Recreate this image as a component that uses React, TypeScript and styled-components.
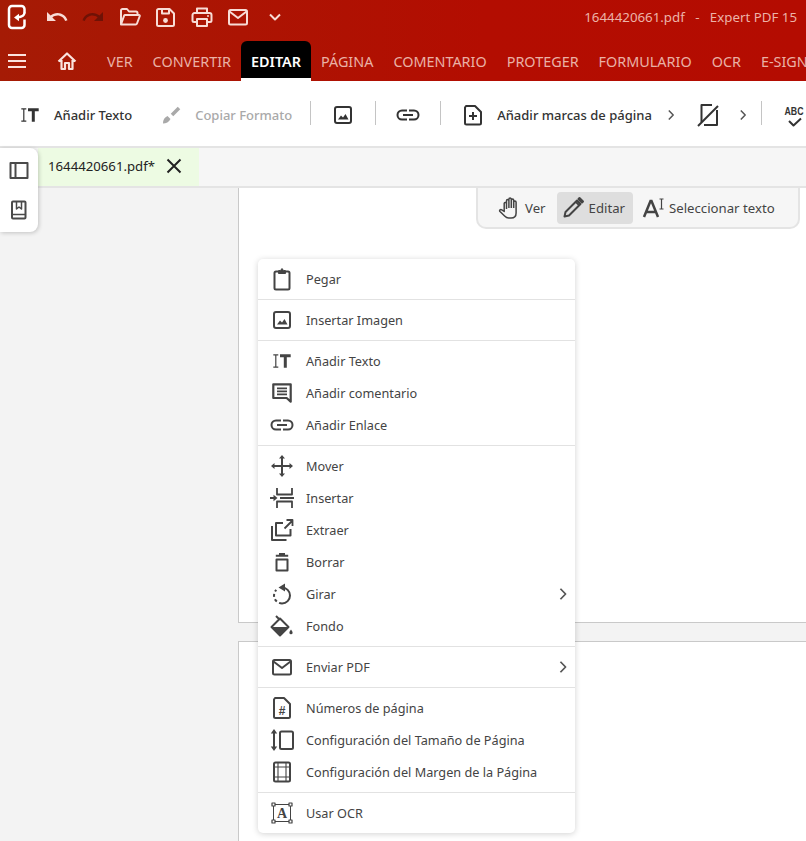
// App.tsx
import React from 'react';
import styled, { createGlobalStyle } from 'styled-components';

const GlobalStyle = createGlobalStyle`
  html, body {
    margin: 0;
    padding: 0;
    height: 100%;
    background: #f3f3f3;
    font-family: "Noto Sans", "Open Sans", "Liberation Sans", sans-serif;
  }
  #root { height: 100%; }
`;

const Window = styled.div`
  position: relative;
  height: 100vh;
  overflow: hidden;
  display: flex;
  flex-direction: column;
`;

const Header = styled.header`
  background: linear-gradient(90deg, #a51b05 0%, #b30d01 60%, #b40c01 100%);
  height: 81px;
  flex: none;
`;

const TitleBar = styled.div`
  height: 41px;
  box-sizing: border-box;
  display: flex;
  align-items: center;
  padding: 0 0 7px 6px;
  color: #fff;
`;

const QuickButton = styled.span<{ $ml: number; $dim?: boolean }>`
  display: flex;
  margin-left: ${p => p.$ml}px;
  color: ${p => (p.$dim ? '#6f1206' : '#f8dcd6')};
`;

const LogoMark = styled.span`
  display: flex;
  color: #fff;
`;

const TitleText = styled.div`
  margin-left: auto;
  margin-right: 9px;
  font-size: 13.3px;
  color: #ecb3a8;
  white-space: pre;
`;

const NavBar = styled.nav`
  height: 40px;
  display: flex;
  align-items: flex-start;
  padding-left: 5px;
  white-space: nowrap;
`;

const NavIcon = styled.span<{ $ml: number }>`
  display: flex;
  margin-left: ${p => p.$ml}px;
  height: 37px;
  box-sizing: border-box;
  padding-top: 3px;
  align-items: center;
  color: #fbe3de;
`;

const NavTab = styled.div<{ $active?: boolean }>`
  height: 37px;
  box-sizing: border-box;
  padding: 3px 10px 0;
  display: flex;
  align-items: center;
  font-size: 14.4px;
  color: ${p => (p.$active ? '#fff' : '#eab1a6')};
  font-weight: ${p => (p.$active ? 600 : 400)};
  background: ${p => (p.$active ? '#000' : 'transparent')};
  border-radius: ${p => (p.$active ? '6px 6px 0 0' : '0')};
  box-shadow: ${p => (p.$active ? '0 3px 0 #fff' : 'none')};
`;

const NavTabs = styled.div`
  display: flex;
  margin-left: 18px;
`;

const Toolbar = styled.div`
  height: 62px;
  flex: none;
  box-sizing: content-box;
  background: #fff;
  border-bottom: 2px solid #e4e4e4;
  display: flex;
  align-items: center;
  white-space: nowrap;
  overflow: hidden;
  padding: 3px 0 0 18px;
`;

const ToolItem = styled.div<{ $ml?: number; $off?: boolean }>`
  display: flex;
  flex: none;
  align-items: center;
  gap: 12px;
  margin-left: ${p => p.$ml ?? 0}px;
  font-size: 13px;
  font-weight: 500;
  color: ${p => (p.$off ? '#a9a9a9' : '#333')};
`;

const ToolDivider = styled.span<{ $ml: number }>`
  flex: none;
  width: 1px;
  height: 24px;
  margin-bottom: 4px;
  background: #c4c4c4;
  margin-left: ${p => p.$ml}px;
`;

const ToolChevron = styled.span<{ $ml: number }>`
  display: flex;
  flex: none;
  margin-left: ${p => p.$ml}px;
  color: #555;
`;

const TabStrip = styled.div`
  height: 38px;
  flex: none;
  background: #f6f6f6;
  border-bottom: 2px solid #e4e4e4;
  padding-left: 38px;
  display: flex;
`;

const FileTab = styled.div`
  width: 161px;
  box-sizing: border-box;
  background: #edfbe3;
  padding: 0 0 2px 10px;
  display: flex;
  align-items: center;
  font-size: 13.2px;
  color: #222;
`;

const TabClose = styled.span`
  display: flex;
  margin-left: 10px;
  color: #222;
`;

const Workspace = styled.main`
  flex: 1;
  min-height: 0;
  background: #f3f3f3;
  padding-left: 238px;
  display: flex;
  flex-direction: column;
  gap: 18px;
`;

const Page = styled.section<{ $h: number; $scrolled?: boolean }>`
  height: ${p => p.$h}px;
  flex: none;
  background: #fff;
  border: 1px solid #c9c9c9;
  border-right: 0;
  border-top-width: ${p => (p.$scrolled ? 0 : 1)}px;
  box-sizing: border-box;
`;

const SidePanel = styled.aside`
  position: absolute;
  left: 0;
  top: 148px;
  width: 38px;
  height: 84px;
  background: #fff;
  border-radius: 0 8px 8px 0;
  box-shadow: 1px 1px 4px rgba(0, 0, 0, 0.2);
  display: flex;
  flex-direction: column;
  align-items: center;
  padding-top: 10px;
  box-sizing: border-box;
  gap: 16px;
  color: #4a4a4a;
`;

const ModeBar = styled.div`
  position: absolute;
  left: 476px;
  top: 188px;
  width: 324px;
  height: 41px;
  box-sizing: border-box;
  background: #f6f6f6;
  border: 2px solid #e4e4e4;
  border-top: 0;
  border-radius: 0 0 10px 10px;
  display: flex;
  align-items: flex-start;
  padding: 4px 0 0 13px;
`;

const ModeButton = styled.div<{ $active?: boolean; $pl: number; $pr: number; $gap?: number }>`
  height: 32px;
  display: flex;
  align-items: center;
  gap: ${p => p.$gap ?? 4}px;
  padding: 0 ${p => p.$pr}px 0 ${p => p.$pl}px;
  border-radius: 4px;
  background: ${p => (p.$active ? '#dedede' : 'transparent')};
  font-size: 13.2px;
  color: #444;
  white-space: nowrap;
`;

const Menu = styled.div`
  position: absolute;
  left: 258px;
  top: 259px;
  width: 317px;
  background: #fff;
  border-radius: 5px;
  box-shadow: 0 1px 6px rgba(0, 0, 0, 0.18);
`;

const MenuGroup = styled.div`
  padding: 4px 0;
  & + & {
    border-top: 1px solid #e2e2e2;
  }
`;

const MenuRow = styled.div`
  height: 32px;
  display: flex;
  align-items: center;
  padding-left: 12px;
  font-size: 12.7px;
  color: #444;
`;

const MenuIcon = styled.span`
  display: flex;
  width: 24px;
  margin-right: 12px;
  color: #444;
`;

const MenuArrow = styled.span`
  display: flex;
  margin-left: auto;
  margin-right: 5px;
  color: #555;
`;

type IconProps = { size?: number; w?: number; h?: number; children: React.ReactNode; vb?: string };

const Ico = ({ size = 24, w, h, children, vb = '0 0 24 24' }: IconProps) => (
  <svg
    width={w ?? size}
    height={h ?? size}
    viewBox={vb}
    fill="none"
    stroke="currentColor"
    strokeWidth={2}
    strokeLinejoin="round"
  >
    {children}
  </svg>
);

const Logo = () => (
  <Ico w={24} h={26} vb="0 0 24 26">
    <path d="M18.500 9.500V5a3 3 0 0 0-3-3H6a3 3 0 0 0-3 3v16a3 3 0 0 0 3 3h9.500a3 3 0 0 0 3-3v-5.500" strokeWidth={2.500} />
    <path d="M18.500 8.500c0 3.500-3 4.500-7.500 5" strokeWidth={2.300} />
    <path d="M8 13.500l5-3.800v7.600z" fill="currentColor" stroke="none" />
  </Ico>
);
const UndoIcon = () => (
  <Ico><path fill="currentColor" stroke="none" d="M12.5 8c-2.65 0-5.05.99-6.9 2.6L2 7v9h9l-3.62-3.62c1.39-1.16 3.16-1.88 5.12-1.88 3.54 0 6.55 2.31 7.6 5.5l2.37-.78C21.08 11.03 17.15 8 12.5 8z" /></Ico>
);
const RedoIcon = () => (
  <Ico><path fill="currentColor" stroke="none" d="M18.4 10.6C16.55 8.99 14.15 8 11.5 8c-4.65 0-8.58 3.03-9.96 7.22L3.9 16c1.05-3.19 4.05-5.5 7.6-5.5 1.95 0 3.73.72 5.12 1.88L13 16h9V7l-3.6 3.6z" /></Ico>
);
const FolderIcon = () => (
  <Ico><path d="M3 19.500V5.500A1.500 1.500 0 0 1 4.500 4H9l2 2.500h7A1.500 1.500 0 0 1 19.500 8v2M3 19.500l3.200-9a1 1 0 0 1 1-.5H21a.8.8 0 0 1 .8 1L19 18.500a1.500 1.500 0 0 1-1.400 1z" /></Ico>
);
const SaveIcon = () => (
  <Ico>
    <path d="M4.500 4h11L20 8.500v11a1.500 1.500 0 0 1-1.500 1.500h-14A1.500 1.500 0 0 1 3 19.500v-14A1.500 1.500 0 0 1 4.500 4z" />
    <path d="M8 4v4.500h7V4" />
    <circle cx="11.500" cy="15.500" r="2.400" fill="currentColor" stroke="none" />
  </Ico>
);
const PrintIcon = () => (
  <Ico>
    <path d="M7 8V3.500h10V8M7 17H4a1.500 1.500 0 0 1-1.500-1.500V10A2 2 0 0 1 4.500 8h15a2 2 0 0 1 2 2v5.500A1.500 1.500 0 0 1 20 17h-3" />
    <path d="M7 14h10v7H7z" />
    <circle cx="18" cy="11" r="1" fill="currentColor" stroke="none" />
  </Ico>
);
const MailIcon = () => (
  <Ico>
    <rect x="3" y="5" width="18" height="14.500" rx="1.500" />
    <path d="M3.500 6.500L12 13l8.500-6.500" />
  </Ico>
);
const ChevronDown = () => (
  <Ico size={18} vb="0 0 18 18"><path d="M4 6.500l5 5 5-5" strokeWidth={2} /></Ico>
);
const BurgerIcon = () => (
  <Ico size={24}><path d="M3 6h18M3 12h18M3 18h18" strokeWidth={2} /></Ico>
);
const HomeIcon = () => (
  <Ico size={24}>
    <path d="M3.500 12.500L12 4.500l8.500 8M6.500 11v9h3.500v-6h4v6h3.500v-9" strokeWidth={2.200} />
  </Ico>
);
const AddTextIcon = () => (
  <Ico>
    <path d="M3.300 5.800h5M3.300 18.200h5M5.800 5.800v12.400" strokeWidth={1.200} />
    <path d="M10 6.800h10.700M15.300 6.800v12" strokeWidth={3} strokeLinejoin="miter" />
  </Ico>
);
const BrushIcon = () => (
  <Ico>
    <path d="M13 12l7-7" strokeWidth={3.500} />
    <path d="M4 20.500c0-3 1-6 4.500-7.500l3 3c-1.500 3-4.500 4.500-7.500 4.500z" fill="currentColor" stroke="none" />
  </Ico>
);
const ImageIcon = () => (
  <Ico>
    <rect x="4" y="4" width="16" height="16" rx="2" />
    <path d="M7 16.500l3-4 2 2 2.500-3.500 3 5.500z" fill="currentColor" stroke="none" />
  </Ico>
);
const LinkIcon = () => (
  <Ico>
    <path d="M11 7.500H6a4.500 4.500 0 0 0 0 9h5M7 12h10M13 7.500h5a4.500 4.500 0 0 1 0 9h-5" />
  </Ico>
);
const DocPlusIcon = () => (
  <Ico>
    <path d="M5 3h9l6 6v11a1.500 1.500 0 0 1-1.500 1.500h-13A1.500 1.500 0 0 1 4 20V4.500z" />
    <path d="M12 9v8M8 13h8" />
  </Ico>
);
const NoPageIcon = () => (
  <Ico>
    <path d="M4.500 19V2H15M20 7v15H7" />
    <path d="M1 23L21 3" />
  </Ico>
);
const SpellIcon = () => (
  <Ico>
    <text x="12" y="12" textAnchor="middle" fontSize="10.500" fontWeight="700" fill="currentColor" stroke="none" textLength="19" lengthAdjust="spacingAndGlyphs" fontFamily="Liberation Sans, sans-serif">ABC</text>
    <path d="M7 18l4.500 4.500L19 15.500" />
  </Ico>
);
const Chevron = ({ s = 12 }: { s?: number }) => (
  <Ico size={s} vb="0 0 12 12"><path d="M3.800 1.500L8.200 6l-4.400 4.500" strokeWidth={1.500} /></Ico>
);
const CloseIcon = () => (
  <Ico size={18} vb="0 0 18 18"><path d="M2.500 2.500l13 13M15.500 2.500l-13 13" strokeWidth={2} /></Ico>
);
const PanelIcon = () => (
  <Ico>
    <rect x="3.500" y="5" width="17" height="15" />
    <path d="M8.500 5v15" />
  </Ico>
);
const BookIcon = () => (
  <Ico>
    <rect x="5" y="3.500" width="13.500" height="17" rx="1" />
    <path d="M9.500 4v7l2.500-2 2.500 2V4" strokeWidth={1.500} />
    <path d="M5 16.500h13.500" strokeWidth={1.500} />
  </Ico>
);
const HandIcon = () => (
  <Ico>
    <path d="M9.500 13V4.800a1.200 1.200 0 0 1 2.400 0V12M11.900 11.500V3.300a1.200 1.200 0 0 1 2.400 0V12M14.300 12V4.300a1.200 1.200 0 0 1 2.400 0V12M16.700 12V6.300a1.200 1.200 0 0 1 2.400 0V17c0 3-2 5-5 5h-2.500c-2 0-3-1-4-2L3 15.500c-1-1.200.500-2.500 1.800-1.700L7.200 15.500V7.300a1.200 1.200 0 0 1 2.300 0" strokeWidth={1.500} />
  </Ico>
);
const PencilIcon = () => (
  <Ico>
    <path d="M3.500 20.500l1-4.500L16 4.500l3.500 3.500L8 19.500z" strokeWidth={2} />
    <path d="M14.500 5.500l4 4" />
    <path d="M17.500 3l1-1 3.500 3.500-1 1z" fill="currentColor" />
  </Ico>
);
const SelectTextIcon = () => (
  <Ico>
    <path d="M2 21L8.500 5h1L16 21M4.500 16h9" strokeWidth={2.500} strokeLinejoin="miter" />
    <path d="M17.500 3h4M17.500 13h4M19.500 3v10" strokeWidth={1.200} />
  </Ico>
);
const ClipboardIcon = () => (
  <Ico>
    <path d="M8 4.500H6A1.500 1.500 0 0 0 4.500 6v15A1.500 1.500 0 0 0 6 22.500h12a1.500 1.500 0 0 0 1.500-1.500V6A1.500 1.500 0 0 0 18 4.500h-2" />
    <path d="M8.500 6.500h7v-3h-2L12 1.500l-1.500 2h-2z" fill="currentColor" strokeWidth={1} />
  </Ico>
);
const CommentIcon = () => (
  <Ico>
    <path d="M3.300 3.300h17.400v17.400l-4-3.700H3.300z" strokeWidth={2.200} />
    <path d="M7 7.300h10M7 10.300h10M7 13.300h10" strokeWidth={1.700} />
  </Ico>
);
const MoveIcon = () => (
  <Ico>
    <path d="M12 3v18M2.500 12h19" />
    <path d="M12 1l3 3.500H9zM12 23l3-3.500H9zM1 12l3.500-3v6zM23 12l-3.500-3v6z" fill="currentColor" stroke="none" />
  </Ico>
);
const InsertIcon = () => (
  <Ico>
    <path d="M7 2v6.500h15V2M7 22v-6.500h15V22" strokeWidth={1.800} />
    <path d="M10 12h14M0 12h5" strokeWidth={1.800} />
    <path d="M7.500 12L3.500 8.800v6.400z" fill="currentColor" stroke="none" />
  </Ico>
);
const ExtractIcon = () => (
  <Ico>
    <path d="M13 5H6v12.500h14.500V11" />
    <path d="M2 8v14h14.500" />
    <path d="M14.500 10.500L22 3M16.500 2h6v6" strokeWidth={1.800} />
  </Ico>
);
const TrashIcon = () => (
  <Ico>
    <path d="M6.500 9.500h11V20.500h-11zM5.800 5.800h12.400M9 4h6" strokeWidth={2} />
  </Ico>
);
const RotateIcon = () => (
  <Ico>
    <path d="M12 5.500a8 8 0 0 1 0 16" />
    <path d="M12 21.500a8 8 0 0 1-5.700-13.600" strokeDasharray="3 2.500" />
    <path d="M15 1.500L8.500 5.500 15 9.500z" fill="currentColor" stroke="none" />
  </Ico>
);
const FillIcon = () => (
  <Ico>
    <path d="M6 2l4 4M10 4.500L18.500 13 10 21.500 1.500 13z" />
    <path d="M2 13h16.500L10 21.500z" fill="currentColor" stroke="none" />
    <path d="M21 15.500c1 1.500 1.600 2.300 1.600 3.200a1.600 1.600 0 0 1-3.200 0c0-.9.600-1.700 1.600-3.200z" fill="currentColor" stroke="none" />
  </Ico>
);
const PageNumIcon = () => (
  <Ico>
    <path d="M5 2h9l6 6v12.500a1.500 1.500 0 0 1-1.500 1.500h-13A1.500 1.500 0 0 1 4 20.500V3.500z" />
    <text x="12" y="18.500" textAnchor="middle" fontSize="12" fontWeight="700" fill="currentColor" stroke="none" fontFamily="Liberation Sans, sans-serif">#</text>
  </Ico>
);
const PageSizeIcon = () => (
  <Ico>
    <rect x="10" y="3.500" width="13" height="17.500" rx="1.500" />
    <path d="M4 4v16" />
    <path d="M4 1L.800 5.500h6.400zM4 23l-3.200-4.500h6.400z" fill="currentColor" stroke="none" />
  </Ico>
);
const MarginIcon = () => (
  <Ico>
    <rect x="4" y="2.500" width="16" height="19" rx="1.500" />
    <path d="M8 3v18M16 3v18M4 7h16M4 17h16" strokeWidth={1.100} />
  </Ico>
);
const OcrIcon = () => (
  <Ico>
    <path d="M3.500 3.500h17v17h-17z" strokeWidth={1} />
    <path d="M2 2h3v3H2zM19 2h3v3h-3zM2 19h3v3H2zM19 19h3v3h-3z" strokeWidth={1.200} fill="#fff" />
    <text x="12" y="17" textAnchor="middle" fontSize="14" fontWeight="700" fill="currentColor" stroke="none" fontFamily="Liberation Serif, serif">A</text>
  </Ico>
);

type MenuItem = { icon: React.ReactNode; label: string; more?: boolean };

const menuGroups: MenuItem[][] = [
  [{ icon: <ClipboardIcon />, label: 'Pegar' }],
  [{ icon: <ImageIcon />, label: 'Insertar Imagen' }],
  [
    { icon: <AddTextIcon />, label: 'Añadir Texto' },
    { icon: <CommentIcon />, label: 'Añadir comentario' },
    { icon: <LinkIcon />, label: 'Añadir Enlace' },
  ],
  [
    { icon: <MoveIcon />, label: 'Mover' },
    { icon: <InsertIcon />, label: 'Insertar' },
    { icon: <ExtractIcon />, label: 'Extraer' },
    { icon: <TrashIcon />, label: 'Borrar' },
    { icon: <RotateIcon />, label: 'Girar', more: true },
    { icon: <FillIcon />, label: 'Fondo' },
  ],
  [{ icon: <MailIcon />, label: 'Enviar PDF', more: true }],
  [
    { icon: <PageNumIcon />, label: 'Números de página' },
    { icon: <PageSizeIcon />, label: 'Configuración del Tamaño de Página' },
    { icon: <MarginIcon />, label: 'Configuración del Margen de la Página' },
  ],
  [{ icon: <OcrIcon />, label: 'Usar OCR' }],
];

const navTabs = ['VER', 'CONVERTIR', 'EDITAR', 'PÁGINA', 'COMENTARIO', 'PROTEGER', 'FORMULARIO', 'OCR', 'E-SIGN'];

const App = () => (
  <Window>
    <GlobalStyle />
    <Header>
      <TitleBar>
        <LogoMark><Logo /></LogoMark>
        <QuickButton $ml={15}><UndoIcon /></QuickButton>
        <QuickButton $ml={12} $dim><RedoIcon /></QuickButton>
        <QuickButton $ml={13}><FolderIcon /></QuickButton>
        <QuickButton $ml={12}><SaveIcon /></QuickButton>
        <QuickButton $ml={12}><PrintIcon /></QuickButton>
        <QuickButton $ml={12}><MailIcon /></QuickButton>
        <QuickButton $ml={16}><ChevronDown /></QuickButton>
        <TitleText>1644420661.pdf   -   Expert PDF 15</TitleText>
      </TitleBar>
      <NavBar>
        <NavIcon $ml={0}><BurgerIcon /></NavIcon>
        <NavIcon $ml={26}><HomeIcon /></NavIcon>
        <NavTabs>
          {navTabs.map(t => (
            <NavTab key={t} $active={t === 'EDITAR'}>{t}</NavTab>
          ))}
        </NavTabs>
      </NavBar>
    </Header>

    <Toolbar>
      <ToolItem><AddTextIcon />Añadir Texto</ToolItem>
      <ToolItem $ml={27} $off><BrushIcon />Copiar Formato</ToolItem>
      <ToolDivider $ml={18} />
      <ToolItem $ml={20}><ImageIcon /></ToolItem>
      <ToolDivider $ml={20} />
      <ToolItem $ml={20}><LinkIcon /></ToolItem>
      <ToolDivider $ml={20} />
      <ToolItem $ml={20}><DocPlusIcon />Añadir marcas de página</ToolItem>
      <ToolChevron $ml={13}><Chevron /></ToolChevron>
      <ToolItem $ml={20}><NoPageIcon /></ToolItem>
      <ToolChevron $ml={16}><Chevron /></ToolChevron>
      <ToolDivider $ml={12} />
      <ToolItem $ml={20}><SpellIcon /></ToolItem>
    </Toolbar>

    <TabStrip>
      <FileTab>
        1644420661.pdf*
        <TabClose><CloseIcon /></TabClose>
      </FileTab>
    </TabStrip>

    <Workspace>
      <Page $h={435} $scrolled />
      <Page $h={300} />
    </Workspace>

    <SidePanel>
      <PanelIcon />
      <BookIcon />
    </SidePanel>

    <ModeBar>
      <ModeButton $pl={6} $pr={11}><HandIcon />Ver</ModeButton>
      <ModeButton $active $pl={4} $pr={8}><PencilIcon />Editar</ModeButton>
      <ModeButton $pl={9} $pr={8} $gap={3}><SelectTextIcon />Seleccionar texto</ModeButton>
    </ModeBar>

    <Menu>
      {menuGroups.map((group, i) => (
        <MenuGroup key={i}>
          {group.map(item => (
            <MenuRow key={item.label}>
              <MenuIcon>{item.icon}</MenuIcon>
              {item.label}
              {item.more && <MenuArrow><Chevron s={14} /></MenuArrow>}
            </MenuRow>
          ))}
        </MenuGroup>
      ))}
    </Menu>
  </Window>
);

export default App;
